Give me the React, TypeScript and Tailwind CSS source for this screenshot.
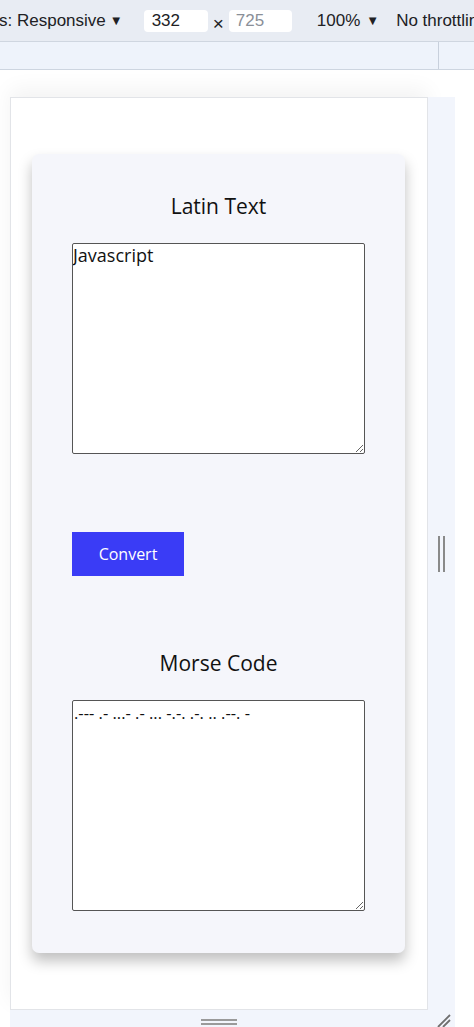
import React, { useState } from "react";

const MORSE: Record<string, string> = {
  a: ".-", b: "-...", c: "-.-.", d: "-..", e: ".", f: "..-.", g: "--.", h: "....",
  i: "..", j: ".---", k: "-.-", l: ".-..", m: "--", n: "-.", o: "---", p: ".--.",
  q: "--.-", r: ".-.", s: "...", t: "-", u: "..-", v: "...-", w: ".--", x: "-..-",
  y: "-.--", z: "--..", " ": "/",
};

const toMorse = (text: string) =>
  text
    .toLowerCase()
    .split("")
    .map((c) => MORSE[c] ?? "")
    .join(" ");

const Toolbar: React.FC = () => (
  <div className="flex h-[42px] items-center overflow-hidden whitespace-nowrap border-b border-[#cfd6e0] bg-[#e8ecf3] font-['Liberation_Sans',sans-serif] text-[17px] text-[#202124]">
    <span className="-ml-[1px] shrink-0">s: Responsive</span>
    <span className="ml-[4px] shrink-0 text-[13px]">▼</span>
    <div className="ml-[21px] flex h-[22px] w-[64px] shrink-0 items-center rounded-[4px] bg-white pl-[8px]">332</div>
    <span className="ml-[5px] mt-[5px] shrink-0 text-[19px] leading-none">×</span>
    <div className="ml-[5px] flex h-[22px] w-[63px] shrink-0 items-center rounded-[4px] bg-white pl-[7px] text-[#8a8f98]">725</div>
    <span className="ml-[25px] shrink-0">100%</span>
    <span className="ml-[6px] shrink-0 text-[13px]">▼</span>
    <span className="ml-[17px] shrink-0">No throttling</span>
  </div>
);

const SubBar: React.FC = () => (
  <div className="flex h-[28px] border-b border-[#cdd5e0] bg-[#eef3fb]">
    <div className="ml-[438px] w-[1px] bg-[#c8d0dc]" />
  </div>
);

const Card: React.FC = () => {
  const [latin, setLatin] = useState("Javascript");
  const [morse, setMorse] = useState(toMorse("Javascript"));

  return (
    <div className="ml-[21px] mr-[22px] mt-[56px] rounded-[7px] bg-[#f5f6fb] px-[40px] pb-[42px] pt-[38px] font-['Open_Sans',sans-serif] text-[#111] shadow-[0_8px_14px_rgba(0,0,0,0.25)]">
      <h2 className="text-center text-[21px] leading-[28px]">Latin Text</h2>
      <textarea
        value={latin}
        onChange={(e) => setLatin(e.target.value)}
        className="mt-[23px] block h-[211px] w-full resize-y rounded-[2px] border border-[#555] bg-white p-0 text-[18px] leading-[22px] text-[#111] outline-none"
      />
      <button
        onClick={() => setMorse(toMorse(latin))}
        className="mt-[78px] flex h-[44px] w-[112px] items-center justify-center bg-[#3a3cf6] text-[16px] text-white"
      >
        Convert
      </button>
      <h2 className="mt-[73px] text-center text-[21px] leading-[28px]">Morse Code</h2>
      <textarea
        value={morse}
        readOnly
        className="mt-[23px] block h-[211px] w-full resize-y rounded-[2px] border border-[#555] bg-white px-[1px] pt-[2px] text-[16.5px] leading-[20px] text-[#111] outline-none"
      />
    </div>
  );
};

const App: React.FC = () => {
  return (
    <div className="h-[1027px] w-[474px] overflow-hidden bg-white">
      <Toolbar />
      <SubBar />

      {/* emulated device frame */}
      <div className="pl-[10px] pt-[27px]">
        <div className="grid w-[445px] grid-cols-[418px_27px] grid-rows-[913px_17px]">
          <div className="border border-[#e2e4e8] bg-white shadow-[0_-8px_20px_rgba(0,0,0,0.05)]">
            <Card />
          </div>
          <div className="flex items-center justify-center bg-[#f2f5fc]">
            <div className="flex gap-[3px]">
              <div className="h-[36px] w-[2px] bg-[#8a8a8a]" />
              <div className="h-[36px] w-[2px] bg-[#8a8a8a]" />
            </div>
          </div>
          <div className="flex justify-center bg-[#f2f5fc] pt-[9px]">
            <div className="ml-[-1px] flex flex-col gap-[2px]">
              <div className="h-[2px] w-[36px] bg-[#9a9a9a]" />
              <div className="h-[2px] w-[36px] bg-[#9a9a9a]" />
            </div>
          </div>
          <div className="bg-[#f2f5fc]">
            <svg width="27" height="17" viewBox="0 0 27 17">
              <path d="M10 17 L22 5 M15 17 L22 10" stroke="#6f6f6f" strokeWidth="1.8" fill="none" />
            </svg>
          </div>
        </div>
      </div>
    </div>
  );
};

export default App;
